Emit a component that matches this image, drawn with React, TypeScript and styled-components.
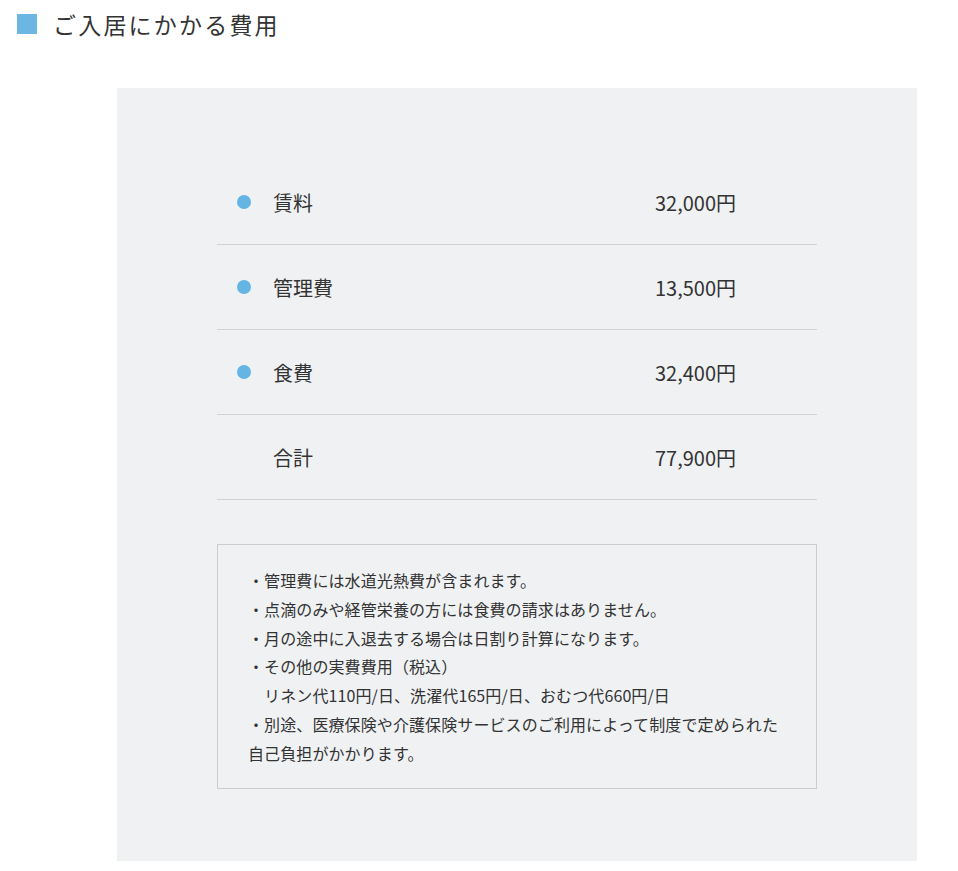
import styled, { createGlobalStyle } from "styled-components";

const GlobalStyle = createGlobalStyle`
  body {
    margin: 0;
    background: #ffffff;
    color: #333333;
    font-family: "Noto Sans CJK JP", "Noto Sans", sans-serif;
  }
`;

const Page = styled.div`
  width: 958px;
  padding-bottom: 11px;
`;

const Heading = styled.h2`
  display: flex;
  align-items: center;
  gap: 16px;

  margin: 0;
  padding: 8px 0 0 17px;

  font-size: 23px;
  font-weight: 400;
  line-height: 32px;
  letter-spacing: 2.2px;
  color: #333333;
`;

const Square = styled.span`
  width: 20px;
  height: 20px;
  background-color: #6cb6e3;
`;

const Panel = styled.section`
  width: 800px;
  margin: 48px 0 0 117px;
  padding: 72px 100px;
  box-sizing: border-box;

  background-color: #eff1f3;
`;

const Row = styled.div`
  display: grid;
  grid-template-columns: 56px 382px 1fr;
  align-items: center;

  height: 85px;
  box-sizing: border-box;
  border-bottom: 1px solid #d0d2d4;

  font-size: 20px;
  color: #333333;
`;

const Dot = styled.span<{ $show: boolean }>`
  width: 14px;
  height: 14px;
  margin-left: 20px;
  border-radius: 50%;
  background-color: ${(p) => (p.$show ? "#64b4e4" : "transparent")};
`;

const Label = styled.span``;

const Value = styled.span``;

const Notes = styled.div`
  margin-top: 44px;
  padding: 21px 30px 20px;

  border: 1px solid #cccccc;

  font-size: 16px;
  line-height: 1.8;
  letter-spacing: 0.1px;
  color: #333333;
`;

const Line = styled.p`
  margin: 0;
`;

const rows = [
  { label: "賃料", value: "32,000円", dot: true },
  { label: "管理費", value: "13,500円", dot: true },
  { label: "食費", value: "32,400円", dot: true },
  { label: "合計", value: "77,900円", dot: false },
];

const notes = [
  "・管理費には水道光熱費が含まれます。",
  "・点滴のみや経管栄養の方には食費の請求はありません。",
  "・月の途中に入退去する場合は日割り計算になります。",
  "・その他の実費費用（税込）",
  "　リネン代110円/日、洗濯代165円/日、おむつ代660円/日",
  "・別途、医療保険や介護保険サービスのご利用によって制度で定められた自己負担がかかります。",
];

const App = () => {
  return (
    <Page>
      <GlobalStyle />
      <Heading>
        <Square />
        ご入居にかかる費用
      </Heading>
      <Panel>
        {rows.map((r) => (
          <Row key={r.label}>
            <Dot $show={r.dot} />
            <Label>{r.label}</Label>
            <Value>{r.value}</Value>
          </Row>
        ))}
        <Notes>
          {notes.map((n) => (
            <Line key={n}>{n}</Line>
          ))}
        </Notes>
      </Panel>
    </Page>
  );
};

export default App;
